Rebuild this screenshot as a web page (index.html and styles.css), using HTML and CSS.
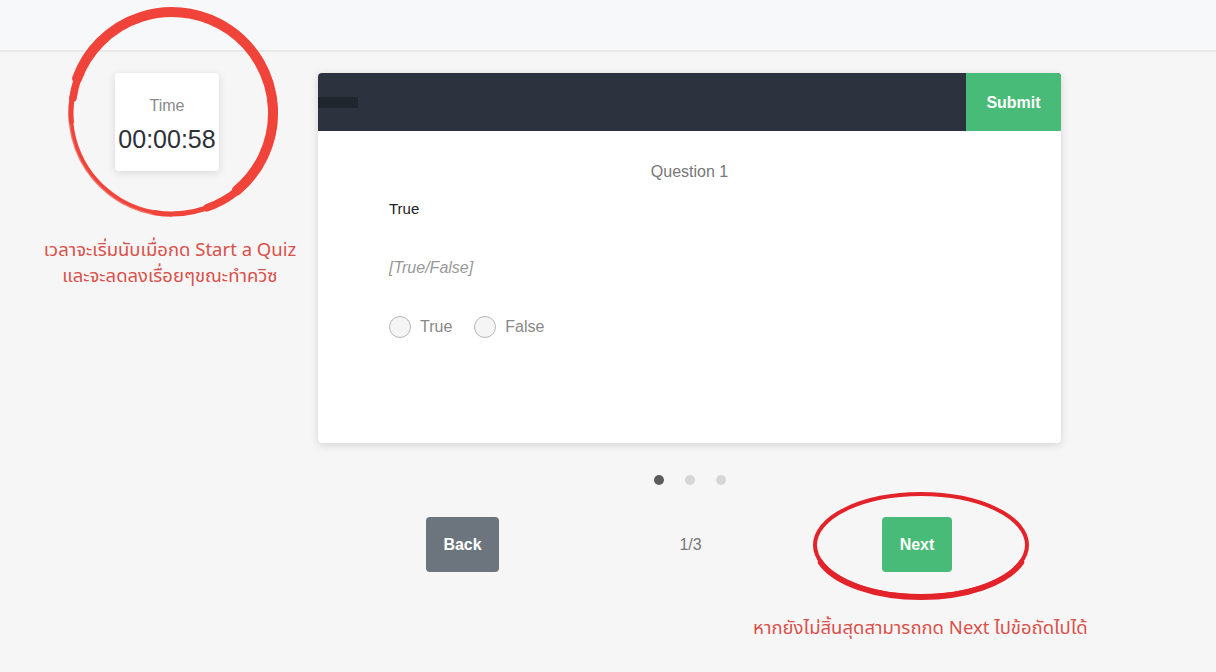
FILE: index.html
```html
<!DOCTYPE html>
<html lang="en">
<head>
  <meta charset="UTF-8" />
  <meta name="viewport" content="width=device-width, initial-scale=1.0" />
  <title>Quiz</title>
  <link rel="stylesheet" href="styles.css">
</head>
<body>
  <!-- Top bar -->
  <header class="topbar"></header>

  <main class="page">
    <!-- Timer column -->
    <aside class="side">
      <div class="timer-wrap">
        <svg class="brush-circle" width="230" height="230" viewBox="0 0 230 230">
          <path d="M165 201.6 A100 100 0 0 1 21 80.8" fill="none" stroke="#f0443a" stroke-width="2" opacity="0.85" />
          <path d="M115 218 A103 103 0 0 1 13.6 97.1" fill="none" stroke="#f25a4d" stroke-width="1.5" opacity="0.8" />
          <path d="M97.5 214.5 A101 101 0 0 1 14.4 123.8" fill="none" stroke="#f0443a" stroke-width="3" stroke-linecap="round" />
          <path d="M14.4 123.8 A101 101 0 1 1 97.5 214.5" fill="none" stroke="#f0443a" stroke-width="5" stroke-linecap="round" />
          <path d="M16 100 A101 101 0 1 1 150 209.8" fill="none" stroke="#f0443a" stroke-width="7.5" stroke-linecap="round" />
          <path d="M20.1 80.5 A101 101 0 1 1 179.9 192.4" fill="none" stroke="#f0443a" stroke-width="10" stroke-linecap="round" />
        </svg>
        <div class="timer-card">
          <div class="timer-label">Time</div>
          <div class="timer-value">00:00:58</div>
        </div>
      </div>
      <p class="note note-left">เวลาจะเริ่มนับเมื่อกด Start a Quiz<br>และจะลดลงเรื่อยๆขณะทำควิซ</p>
    </aside>

    <!-- Quiz column -->
    <section class="quiz">
      <div class="quiz-card">
        <div class="quiz-head">
          <span class="head-mark"></span>
          <button class="btn-submit">Submit</button>
        </div>
        <div class="quiz-body">
          <div class="q-title">Question 1</div>
          <div class="q-text">True</div>
          <div class="q-type">[True/False]</div>
          <div class="q-options">
            <label class="opt"><span class="radio"></span>True</label>
            <label class="opt"><span class="radio"></span>False</label>
          </div>
        </div>
      </div>

      <div class="dots">
        <span class="dot active"></span>
        <span class="dot"></span>
        <span class="dot"></span>
      </div>

      <div class="nav">
        <button class="btn btn-back">Back</button>
        <span class="count">1/3</span>
        <div class="next-wrap">
          <svg class="ring" width="224" height="112" viewBox="0 0 224 112">
            <ellipse cx="112" cy="56" rx="106" ry="51" fill="none" stroke="#e3232a" stroke-width="4" />
            <path d="M212.5 73.4 A106 51 0 0 1 11.5 73.4" fill="none" stroke="#e3232a" stroke-width="5.5" stroke-linecap="round" />
          </svg>
          <button class="btn btn-next">Next</button>
          <p class="note note-next">หากยังไม่สิ้นสุดสามารถกด Next ไปข้อถัดไปได้</p>
        </div>
      </div>
    </section>
  </main>
</body>
</html>
```

FILE: styles.css
```css
body {
  margin: 0;
  min-height: 100vh;
  font-family: "Liberation Sans", Arial, sans-serif;
  background-color: #f6f6f6;
}
.topbar {
  height: 50px;
  background: #f7f8fa;
  border-bottom: 2px solid #e8e8e8;
}
.page {
  display: flex;
  padding-top: 21px;
  padding-bottom: 100px;
}
.side {
  width: 260px;
  margin-left: 40px;
  margin-right: 18px;
  display: flex;
  flex-direction: column;
  align-items: center;
}
.timer-wrap {
  position: relative;
  margin-right: 6px;
}
.brush-circle {
  position: absolute;
  left: -58px;
  top: -75px;
}
.timer-card {
  position: relative;
  width: 104px;
  height: 98px;
  box-sizing: border-box;
  padding-top: 24px;
  background: #fff;
  border-radius: 4px;
  box-shadow: 0 2px 8px rgba(0, 0, 0, 0.12);
  text-align: center;
}
.timer-label {
  font-size: 16px;
  color: #8a8a8a;
}
.timer-value {
  margin-top: 10px;
  font-size: 25px;
  color: #2d3038;
}
.note {
  margin: 0;
  font-family: "Noto Sans Thai", "Noto Sans", "DejaVu Sans", sans-serif;
  font-size: 18.5px;
  line-height: 26px;
  color: #d9514a;
  text-align: center;
}
.note-left {
  margin-top: 66px;
  white-space: nowrap;
}
.quiz {
  width: 743px;
}
.quiz-card {
  background: #fff;
  border-radius: 4px;
  box-shadow: 0 2px 8px rgba(0, 0, 0, 0.14);
  overflow: hidden;
}
.quiz-head {
  height: 58px;
  display: flex;
  align-items: center;
  justify-content: space-between;
  background: #2c333e;
}
.head-mark {
  width: 40px;
  height: 11px;
  background: #20262e;
}
.btn-submit {
  height: 58px;
  width: 95px;
  padding-top: 3px;
  border: none;
  background: #48bb78;
  color: #fff;
  font-family: inherit;
  font-size: 16px;
  font-weight: bold;
}
.quiz-body {
  height: 312px;
  box-sizing: border-box;
  padding: 32px 71px 0;
}
.q-title {
  text-align: center;
  font-size: 16px;
  color: #777;
}
.q-text {
  margin-top: 19px;
  font-size: 15px;
  color: #222;
}
.q-type {
  margin-top: 42px;
  font-size: 16px;
  font-style: italic;
  color: #999;
}
.q-options {
  margin-top: 39px;
  display: flex;
  gap: 22px;
}
.opt {
  display: flex;
  align-items: center;
  gap: 9px;
  font-size: 16px;
  color: #888;
}
.radio {
  width: 20px;
  height: 20px;
  border: 1px solid #b8b8b8;
  border-radius: 50%;
  background: #f5f5f5;
}
.dots {
  display: flex;
  justify-content: center;
  gap: 21px;
  margin-top: 32px;
}
.dot {
  width: 10px;
  height: 10px;
  border-radius: 50%;
  background: #d6d6d6;
}
.dot.active {
  background: #5c5c5c;
}
.nav {
  display: flex;
  align-items: center;
  justify-content: space-between;
  padding: 0 109px 0 108px;
  margin-top: 32px;
}
.btn {
  height: 55px;
  border: none;
  border-radius: 4px;
  color: #fff;
  font-family: inherit;
  font-size: 16px;
  font-weight: bold;
}
.btn-back {
  width: 73px;
  background: #6c757d;
}
.btn-next {
  width: 70px;
  background: #48bb78;
}
.count {
  font-size: 16px;
  color: #777;
}
.next-wrap {
  position: relative;
}
.ring {
  position: absolute;
  left: -73px;
  top: -28px;
}
.note-next {
  position: absolute;
  left: 50%;
  top: 98px;
  transform: translateX(-49%);
  white-space: nowrap;
}
```
